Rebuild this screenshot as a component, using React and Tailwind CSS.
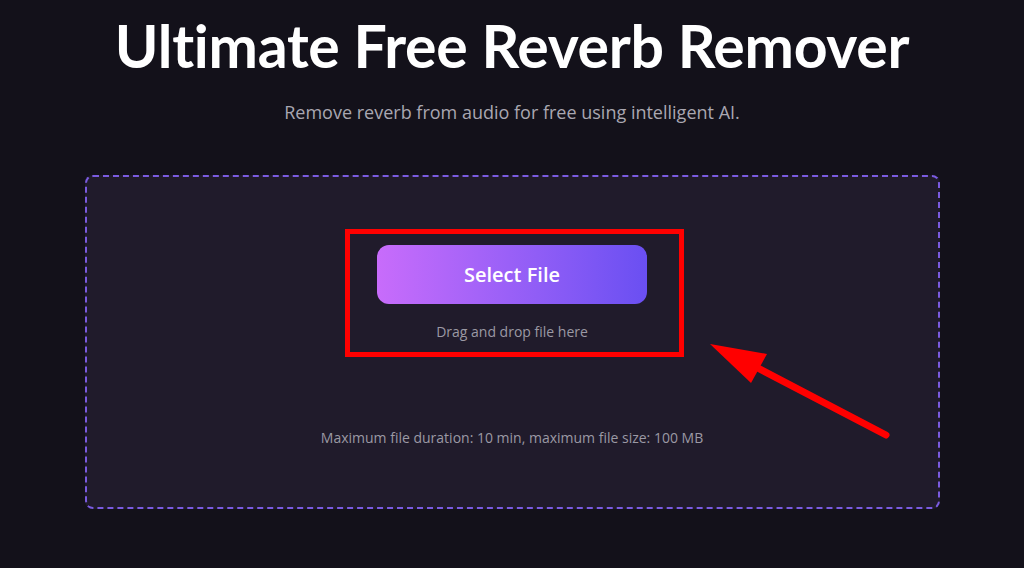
export default function App() {
  return (
    <div className="relative w-[1024px] h-[568px] overflow-hidden bg-[#13111a] flex flex-col items-center" style={{ fontFamily: '"Open Sans", "Noto Sans", sans-serif' }}>
      <h1 className="mt-[8px] text-[59px] leading-[76px] font-bold text-white tracking-[-0.3px]" style={{ fontFamily: 'Lato, "Open Sans", sans-serif' }}>Ultimate Free Reverb Remover</h1>
      <p className="mt-[16px] text-[18px] leading-[24px] text-[#a9a7b1]">Remove reverb from audio for free using intelligent AI.</p>
      <div className="mt-[51px] w-[855px] h-[334px] rounded-[8px] border-2 border-dashed border-[#7a5be0] bg-[#201b2b] flex flex-col items-center">
        <button className="mt-[68px] w-[270px] h-[59px] rounded-[12px] bg-gradient-to-r from-[#c86cfb] to-[#6a4ff2] text-white text-[20px] font-semibold">Select File</button>
        <p className="mt-[18px] text-[14px] leading-[20px] text-[#9b99a4]">Drag and drop file here</p>
        <p className="mt-[86px] text-[14px] leading-[20px] text-[#9b99a4]">Maximum file duration: 10 min, maximum file size: 100 MB</p>
      </div>
      <div className="absolute left-[345px] top-[229px] w-[339px] h-[128px] border-[5px] border-[#ff0000]" />
      <svg className="absolute left-0 top-0" width="1024" height="568" viewBox="0 0 1024 568">
        <line x1="886" y1="435" x2="752" y2="365" stroke="#ff0000" strokeWidth="7" strokeLinecap="round" />
        <polygon points="710,344 767,354 751,383" fill="#ff0000" />
      </svg>
    </div>
  );
}
